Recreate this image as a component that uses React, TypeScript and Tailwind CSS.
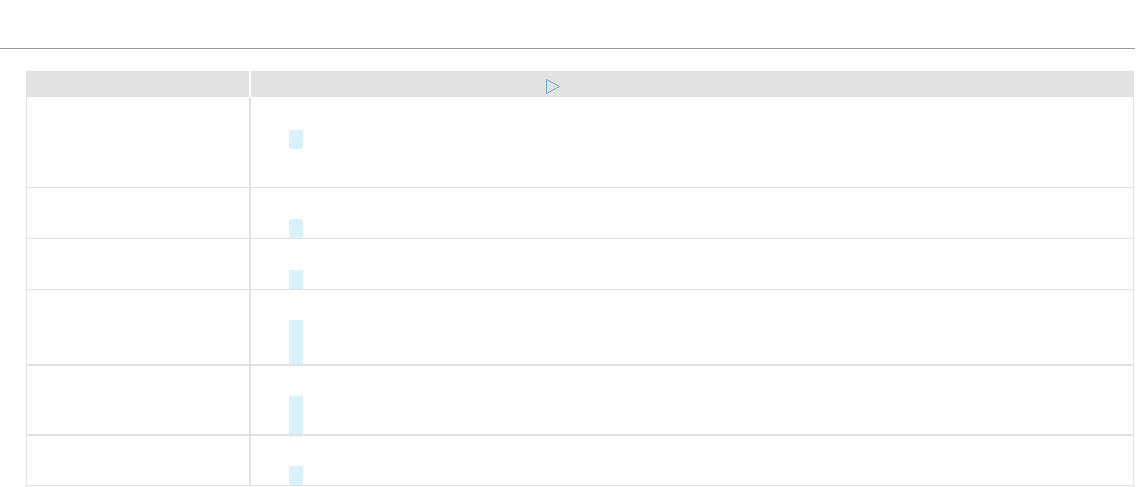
import React from "react";

const rows = [
  { h: "h-[90px]", b: "border-b", block: "h-[19px]", pad: "pb-[38px]" },
  { h: "h-[50px]", b: "border-b", block: "h-[19px]", pad: "pb-0" },
  { h: "h-[50px]", b: "border-b", block: "h-[19px]", pad: "pb-0" },
  { h: "h-[74px]", b: "border-b-2", block: "h-[44px]", pad: "pb-0" },
  { h: "h-[68px]", b: "border-b-2", block: "h-[38px]", pad: "pb-0" },
  { h: "h-[49px]", b: "border-b", block: "h-[19px]", pad: "pb-0" },
];

export default function App() {
  return (
    <div className="w-[1136px] h-[487px] bg-white overflow-hidden" style={{ fontFamily: '"Liberation Sans", Arial, sans-serif' }}>
      <div className="h-[48px]" />
      <div className="w-[1135px] h-px bg-[#999999]" />
      <div className="h-[22px]" />
      <div className="ml-[26px] w-[1108px]">
        <div className="flex h-[26px]">
          <div className="w-[223px] bg-[#e2e2e2]" />
          <div className="w-[2px]" />
          <div className="flex-1 bg-[#e2e2e2] flex items-start pt-[8px] pl-[295px]">
            <svg width="15" height="15" viewBox="0 0 15 15" className="block">
              <path d="M0.5 0.5 L13.5 7.5 L0.5 14.5 Z" fill="none" stroke="#66acd1" strokeWidth="1" />
            </svg>
          </div>
        </div>
        <div className="border-l border-r border-[#e2e2e2]">
          {rows.map((r, i) => (
            <div key={i} className={`flex ${r.b} border-[#e2e2e2]`}>
              <div className={`w-[222px] ${r.h}`} />
              <div className="w-[2px] bg-[#e2e2e2]" />
              <div className={`flex-1 ${r.h} flex items-end pl-[38px] ${r.pad}`}>
                <div className={`w-[14px] ${r.block} bg-[#d9f1fa]`} />
              </div>
            </div>
          ))}
        </div>
      </div>
    </div>
  );
}
